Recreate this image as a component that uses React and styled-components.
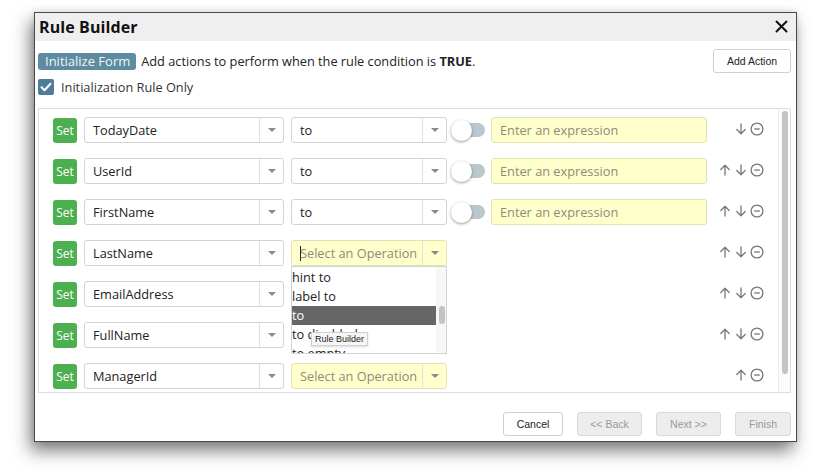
import React from 'react';
import styled, { createGlobalStyle } from 'styled-components';

const GlobalStyle = createGlobalStyle`
  body {
    margin: 0;
    background: #fff;
    font-family: "Open Sans", "DejaVu Sans", sans-serif;
    color: #222;
  }
`

const Page = styled.div`
  padding: 12px 0 0 34px;
  width: 813px;
  height: 473px;
  box-sizing: border-box;
`
const Dialog = styled.div`
  width: 763px;
  height: 430px;
  box-sizing: border-box;
  border: 1px solid #4a4a4a;
  background: #fff;
  display: flex;
  flex-direction: column;
  box-shadow: -4px 9px 16px rgba(0, 0, 0, 0.5), 0 0 6px rgba(0, 0, 0, 0.12);
`
const Header = styled.header`
  height: 27px;
  background: #efefef;
  display: flex;
  align-items: center;
  justify-content: space-between;
  padding: 0 8px 1px 4px;
  h1 {
    margin: 0;
    font-size: 16px;
    font-weight: 700;
    color: #111;
    letter-spacing: 0.1px;
  }
`
const Body = styled.div`
  flex: 1;
  display: flex;
  flex-direction: column;
  padding: 8px 5px 5px 3px;
`
const Toolbar = styled.div`
  display: flex;
  align-items: center;
  height: 24px;
  font-size: 12.75px;
  color: #222;
  b {
    font-weight: 700;
  }
`
const Badge = styled.span`
  background: #5d8ba0;
  color: #f2f6f8;
  border-radius: 3px;
  padding: 0 6px 0 7px;
  height: 17px;
  line-height: 17px;
  margin-right: 5px;
  font-size: 13px;
`
const SmallButton = styled.button`
  height: 24px;
  box-sizing: border-box;
  border: 1px solid ${p => p.disabled ? '#dadada' : '#cfcfcf'};
  background: ${p => p.disabled ? '#ededed' : '#fff'};
  color: ${p => p.disabled ? '#9a9a9a' : '#222'};
  border-radius: 3px;
  font-family: "Liberation Sans", Arial, sans-serif;
  font-size: 10.5px;
  padding: 0;
  width: ${p => p.w}px;
`
const CheckRow = styled.label`
  display: flex;
  align-items: center;
  margin-top: 6px;
  height: 16px;
  font-size: 12.75px;
  color: #333;
  gap: 7px;
`
const CheckBox = styled.span`
  width: 16px;
  height: 16px;
  border-radius: 2px;
  background: #4f7d99;
  display: flex;
  align-items: center;
  justify-content: center;
`
const Panel = styled.div`
  margin-top: 13px;
  height: 285px;
  box-sizing: border-box;
  border: 1px solid #dedede;
  display: flex;
  overflow: hidden;
`
const Rows = styled.div`
  flex: 1;
  display: flex;
  flex-direction: column;
  gap: 15px;
  padding: 8px 14px 0 14px;
`
const ScrollTrack = styled.div`
  width: 11px;
  border-left: 1px solid #ececec;
  background: #fbfbfb;
`
const ScrollThumb = styled.div`
  width: 6px;
  margin: ${p => p.top}px 0 0 3px;
  height: ${p => p.h}px;
  border-radius: 3px;
  background: #c3c3c3;
`
const Row = styled.div`
  display: flex;
  align-items: center;
  height: 26px;
  gap: 7px;
  flex-shrink: 0;
`
const SetTag = styled.span`
  width: 24px;
  height: 25px;
  border-radius: 3px;
  background: #4caf50;
  color: #fff;
  font-size: 12px;
  display: flex;
  align-items: center;
  justify-content: center;
`
const SelectBox = styled.div`
  position: relative;
  width: ${p => p.w}px;
  height: 26px;
  box-sizing: border-box;
  border: 1px solid ${p => p.yellow ? '#e4e2b4' : '#d3d3d3'};
  background: ${p => p.yellow ? '#ffffcc' : '#fff'};
  border-radius: 3px;
  display: flex;
  align-items: center;
`
const SelectValue = styled.span`
  flex: 1;
  padding-left: 8px;
  font-size: 12.75px;
  color: ${p => p.muted ? '#8c8c7a' : '#222'};
  display: flex;
  align-items: center;
`
const Caret = styled.span`
  width: 1px;
  height: 15px;
  background: #222;
  margin-right: -1px;
`
const ArrowCell = styled.span`
  width: 23px;
  height: 100%;
  border-left: 1px solid #e0e0e0;
  display: flex;
  align-items: center;
  justify-content: center;
  &::after {
    content: '';
    border-left: 4px solid transparent;
    border-right: 4px solid transparent;
    border-top: 4px solid #8a8a8a;
  }
`
const Toggle = styled.span`
  width: 34px;
  display: flex;
  align-items: center;
  margin-left: -3px;
`
const Knob = styled.span`
  width: 21px;
  height: 21px;
  border-radius: 50%;
  background: #fff;
  box-shadow: 0 1px 3px rgba(0, 0, 0, 0.4);
  position: relative;
  z-index: 1;
`
const Track = styled.span`
  width: 22px;
  height: 14px;
  margin-left: -9px;
  border-radius: 0 7px 7px 0;
  background: #bac7cf;
`
const Expression = styled.div`
  width: 216px;
  height: 26px;
  box-sizing: border-box;
  margin-left: -1px;
  border: 1px solid #e4e2b4;
  background: #ffffcc;
  border-radius: 3px;
  padding-left: 8px;
  font-size: 12.75px;
  color: #8c8c7a;
  display: flex;
  align-items: center;
`
const Actions = styled.div`
  margin-left: auto;
  margin-top: -3px;
  display: flex;
  align-items: center;
  gap: 2px;
  color: #777;
  svg {
    display: block;
  }
`
const Menu = styled.div`
  position: absolute;
  top: calc(100% + 1px);
  left: -1px;
  width: 156px;
  height: 88px;
  box-sizing: border-box;
  border: 1px solid #d3d3d3;
  background: #fff;
  display: flex;
  z-index: 5;
`
const MenuList = styled.div`
  flex: 1;
  overflow: hidden;
  padding-top: 1px;
`
const MenuItem = styled.div`
  height: 19px;
  line-height: 19px;
  font-size: 12.75px;
  color: ${p => p.active ? '#fff' : '#222'};
  background: ${p => p.active ? '#666' : 'transparent'};
  white-space: nowrap;
`
const MenuScroll = styled.div`
  width: 10px;
  background: #f7f7f7;
`
const Tooltip = styled.span`
  position: absolute;
  left: 19px;
  top: 65px;
  font-family: "Liberation Sans", Arial, sans-serif;
  font-size: 9px;
  padding: 1px 3px;
  background: #f6f6f6;
  border: 1px solid #d0d0d0;
  color: #222;
  box-shadow: 0 1px 2px rgba(0, 0, 0, 0.15);
`
const Footer = styled.div`
  margin-top: auto;
  display: flex;
  justify-content: flex-end;
  gap: 14px;
`

const UpIcon = () => (
  <svg width="14" height="14" viewBox="0 0 14 14" fill="none" stroke="currentColor" strokeWidth="1.3" strokeLinecap="round" strokeLinejoin="round">
    <path d="M7 12V2.5M2.8 6.5L7 2.3l4.2 4.2" />
  </svg>
)
const DownIcon = () => (
  <svg width="14" height="14" viewBox="0 0 14 14" fill="none" stroke="currentColor" strokeWidth="1.3" strokeLinecap="round" strokeLinejoin="round">
    <path d="M7 2v9.5M2.8 7.5L7 11.7l4.2-4.2" />
  </svg>
)
const RemoveIcon = () => (
  <svg width="14" height="14" viewBox="0 0 14 14" fill="none" stroke="currentColor" strokeWidth="1.3">
    <circle cx="7" cy="7" r="5.9" />
    <path d="M4.2 7h5.6" />
  </svg>
)

const rules = [
  { field: 'TodayDate', op: 'to', expr: true, up: false, down: true },
  { field: 'UserId', op: 'to', expr: true, up: true, down: true },
  { field: 'FirstName', op: 'to', expr: true, up: true, down: true },
  { field: 'LastName', open: true, up: true, down: true },
  { field: 'EmailAddress', hidden: true, up: true, down: true },
  { field: 'FullName', hidden: true, up: true, down: true },
  { field: 'ManagerId', up: true, down: false },
]

const menuItems = ['hint to', 'label to', 'to', 'to disabled', 'to empty']

const OperationMenu = () => (
  <Menu>
    <MenuList>
      {menuItems.map(item => (
        <MenuItem key={item} active={item === 'to'}>{item}</MenuItem>
      ))}
    </MenuList>
    <MenuScroll>
      <ScrollThumb top={39} h={18} />
    </MenuScroll>
    <Tooltip>Rule Builder</Tooltip>
  </Menu>
)

const RuleRow = ({ rule }) => (
  <Row>
    <SetTag>Set</SetTag>
    <SelectBox w={200}>
      <SelectValue>{rule.field}</SelectValue>
      <ArrowCell />
    </SelectBox>
    {rule.op &&
      <SelectBox w={156}>
        <SelectValue>{rule.op}</SelectValue>
        <ArrowCell />
      </SelectBox>
    }
    {!rule.op && !rule.hidden &&
      <SelectBox w={156} yellow>
        <SelectValue muted>
          {rule.open && <Caret />}
          Select an Operation
        </SelectValue>
        <ArrowCell />
        {rule.open && <OperationMenu />}
      </SelectBox>
    }
    {rule.expr &&
      <>
        <Toggle>
          <Knob />
          <Track />
        </Toggle>
        <Expression>Enter an expression</Expression>
      </>
    }
    <Actions>
      {rule.up && <UpIcon />}
      {rule.down && <DownIcon />}
      <RemoveIcon />
    </Actions>
  </Row>
)

export default function App() {
  return (
    <>
      <GlobalStyle />
      <Page>
        <Dialog>
          <Header>
            <h1>Rule Builder</h1>
            <svg width="13" height="13" viewBox="0 0 13 13" stroke="#111" strokeWidth="2" strokeLinecap="round">
              <path d="M1.5 1.5l10 10M11.5 1.5l-10 10" />
            </svg>
          </Header>
          <Body>
            <Toolbar>
              <Badge>Initialize Form</Badge>
              <span>Add actions to perform when the rule condition is <b>TRUE</b>.</span>
              <SmallButton w={78} style={{ marginLeft: 'auto' }}>Add Action</SmallButton>
            </Toolbar>
            <CheckRow>
              <CheckBox>
                <svg width="12" height="10" viewBox="0 0 12 10" fill="none" stroke="#fff" strokeWidth="2" strokeLinecap="round" strokeLinejoin="round">
                  <path d="M1.5 5.2l3 3 6-6.5" />
                </svg>
              </CheckBox>
              Initialization Rule Only
            </CheckRow>
            <Panel>
              <Rows>
                {rules.map(rule => <RuleRow key={rule.field} rule={rule} />)}
              </Rows>
              <ScrollTrack>
                <ScrollThumb top={2} h={263} />
              </ScrollTrack>
            </Panel>
            <Footer>
              <SmallButton w={60}>Cancel</SmallButton>
              <SmallButton w={65} disabled>&lt;&lt; Back</SmallButton>
              <SmallButton w={65} disabled>Next &gt;&gt;</SmallButton>
              <SmallButton w={56} disabled>Finish</SmallButton>
            </Footer>
          </Body>
        </Dialog>
      </Page>
    </>
  );
}
